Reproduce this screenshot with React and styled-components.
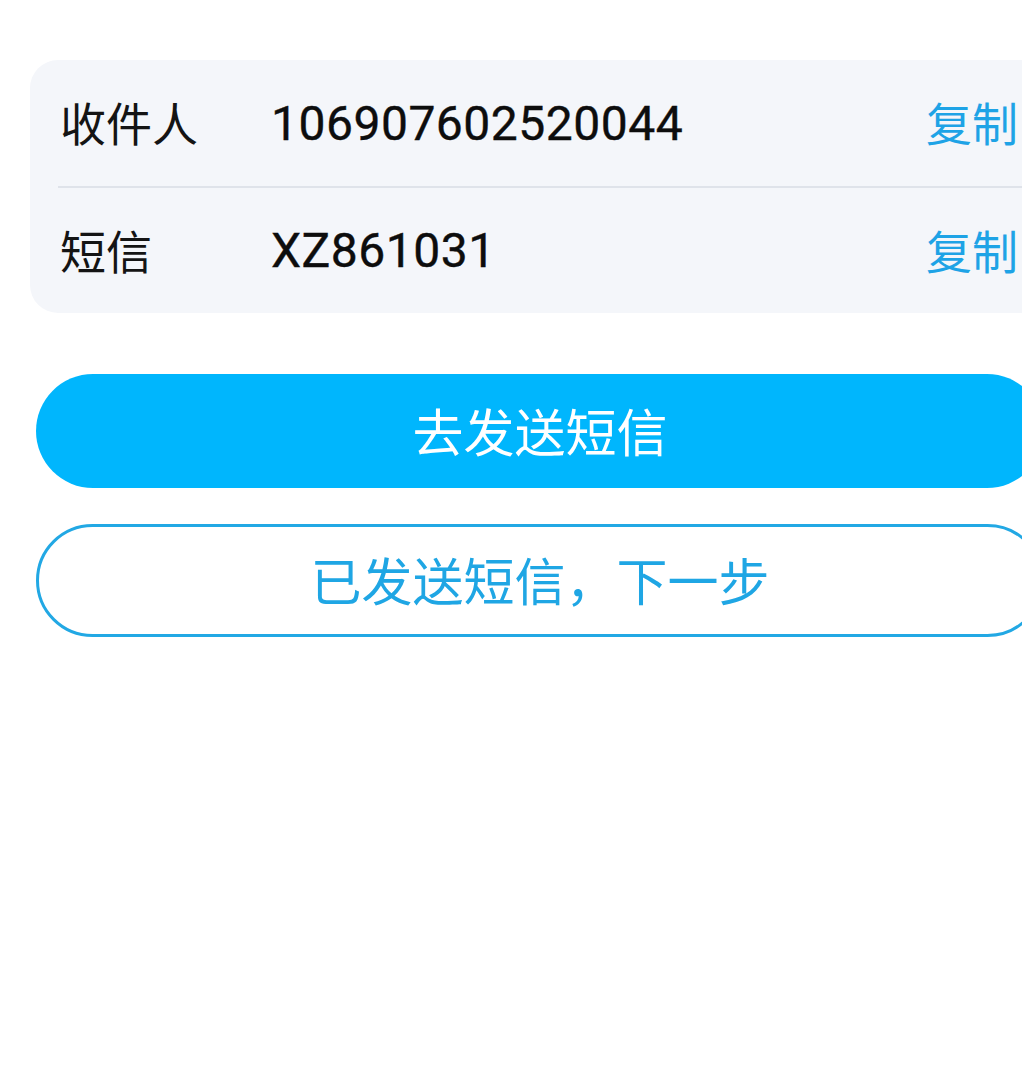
import React from "react";
import styled, { createGlobalStyle } from "styled-components";

const Global = createGlobalStyle`
  html, body {
    margin: 0;
    padding: 0;
    background: #ffffff;
    overflow: hidden;
  }
  body {
    font-family: "Noto Sans CJK SC", "Noto Sans", sans-serif;
  }
`;

const Page = styled.div`
  width: 1080px;
  padding-top: 60px;
  box-sizing: border-box;
`;

const Card = styled.div`
  margin: 0 30px;
  background: #f4f6fa;
  border-radius: 28px;
  display: flex;
  flex-direction: column;
`;

const Row = styled.div`
  height: ${(p) => p.$h}px;
  display: flex;
  align-items: center;
  padding: 0 32px 0 30px;
`;

const Label = styled.span`
  width: 211px;
  flex-shrink: 0;
  font-family: "Noto Sans CJK SC", sans-serif;
  font-size: 46px;
  color: #141414;
  margin-top: -4px;
`;

const Value = styled.span`
  flex: 1;
  font-family: Roboto, "Noto Sans", sans-serif;
  font-size: 48px;
  font-weight: 400;
  letter-spacing: 0.5px;
  color: #0d0d0d;
  -webkit-text-stroke: 0.4px #0d0d0d;
`;

const Copy = styled.span`
  font-family: "Noto Sans CJK SC", sans-serif;
  font-size: 46px;
  color: #1ea3e6;
  margin-top: -4px;
`;

const Divider = styled.div`
  height: 2px;
  margin: 0 28px;
  background: #dfe3ea;
`;

const Actions = styled.div`
  margin-top: 61px;
  padding: 0 36px;
  display: flex;
  flex-direction: column;
  gap: 36px;
`;

const Button = styled.div`
  height: ${(p) => (p.$outline ? 113 : 114)}px;
  box-sizing: border-box;
  border-radius: 57px;
  display: flex;
  align-items: center;
  justify-content: center;
  font-family: "Noto Sans CJK SC", sans-serif;
  font-size: 51px;
  padding-bottom: 3px;
  background: ${(p) => (p.$outline ? "#ffffff" : "#00b6fd")};
  color: ${(p) => (p.$outline ? "#1fa6e4" : "#ffffff")};
  border: ${(p) => (p.$outline ? "3px solid #22a8e4" : "none")};
`;

const rows = [
  { label: "收件人", value: "106907602520044", h: 126 },
  { label: "短信", value: "XZ861031", h: 125 },
];

export default function App() {
  return (
    <Page>
      <Global />
      <Card>
        {rows.map((r, i) => (
          <React.Fragment key={r.label}>
            {i > 0 && <Divider />}
            <Row $h={r.h}>
              <Label>{r.label}</Label>
              <Value>{r.value}</Value>
              <Copy>复制</Copy>
            </Row>
          </React.Fragment>
        ))}
      </Card>
      <Actions>
        <Button>去发送短信</Button>
        <Button $outline>已发送短信，下一步</Button>
      </Actions>
    </Page>
  );
}
